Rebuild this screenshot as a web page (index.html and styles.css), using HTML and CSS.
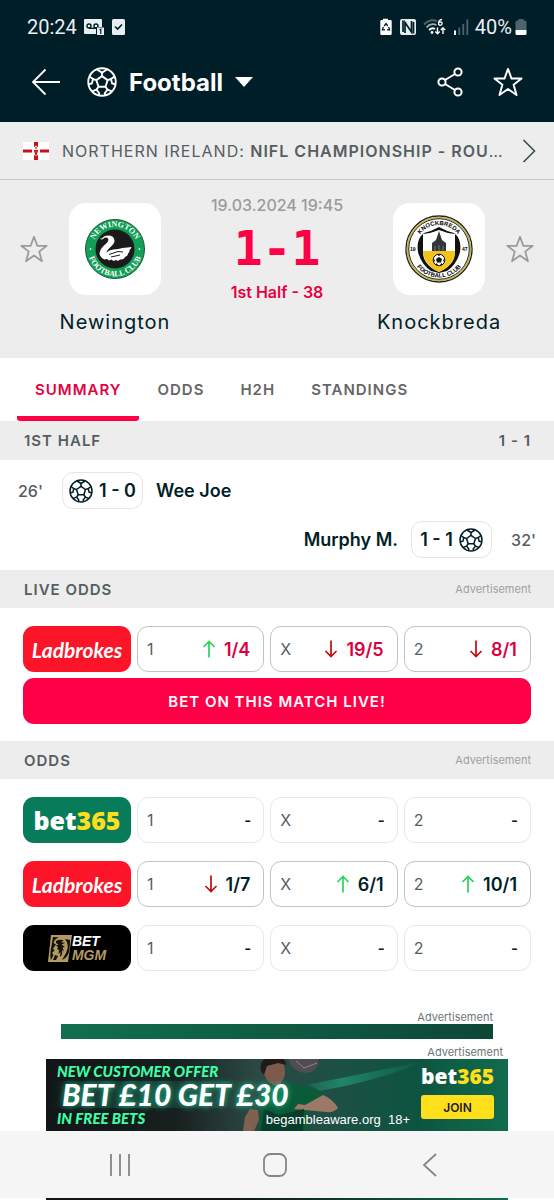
FILE: index.html
```html
<!DOCTYPE html>
<html lang="en">
<head>
    <meta charset="UTF-8">
    <meta name="viewport" content="width=device-width, initial-scale=1.0">
    <title>Newington - Knockbreda</title>
    <link rel="stylesheet" href="styles.css">
</head>
<body>

    <!-- Shared icons -->
    <svg class="sprite" aria-hidden="true">
        <symbol id="ball" viewBox="0 0 24 24">
            <g fill="none" stroke="currentColor" stroke-width="1.5" stroke-linejoin="round">
                <circle cx="12" cy="12" r="11"/>
                <path d="M12 7.300l4.500 3.200-1.700 5.300H9.200L7.500 10.500z"/>
                <path d="M12 7.300V4.500M16.500 10.500l2.700-.9M14.800 15.800l1.600 2.300M9.200 15.800l-1.600 2.300M7.500 10.500l-2.700-.9"/>
                <path d="M8 2l4 2.500L16 2M22 7.500l-2.800 2.100.9 3.600 2.700.6M20 19.500l-3.600-1.400-2.200 2.900.4 1.700M9.400 22.700l.4-1.700-2.200-2.900L4 19.500M1.200 13.800l2.700-.6.9-3.600L2 7.500"/>
            </g>
        </symbol>
        <symbol id="star" viewBox="0 0 28 28">
            <path d="M14 1.8l3.300 9h9.400l-7.500 5.800 2.800 9.600-8-5.600-8 5.600 2.800-9.600-7.500-5.800h9.400z" fill="none" stroke="currentColor" stroke-width="1.8" stroke-linejoin="round"/>
        </symbol>
        <symbol id="up" viewBox="0 0 14 18">
            <path d="M7 17.500V1.500M1.500 7L7 1.500 12.500 7" fill="none" stroke="currentColor" stroke-width="1.700"/>
        </symbol>
        <symbol id="down" viewBox="0 0 14 18">
            <path d="M7 .5v16M1.500 11L7 16.500 12.500 11" fill="none" stroke="currentColor" stroke-width="1.700"/>
        </symbol>
    </svg>

    <header class="top">
        <div class="status-bar">
            <span class="clock">20:24</span>
            <svg width="22" height="18" viewBox="0 0 22 18">
                <path d="M2 1h16q1 0 1 1v7h-6v7H2q-1 0-1-1V2q0-1 1-1z" fill="#e8eef0"/>
                <g fill="none" stroke="#001e28" stroke-width="1.400">
                    <circle cx="6" cy="8" r="2"/>
                    <circle cx="13" cy="8" r="2"/>
                    <path d="M6 10.300h7"/>
                </g>
                <path d="M14 9.500h7V17h-7z" fill="#e8eef0"/>
                <path d="M16.500 12l1.300-.8V16" fill="none" stroke="#001e28" stroke-width="1.200"/>
            </svg>
            <svg class="task" width="15" height="18" viewBox="0 0 15 18">
                <rect x="1" y="1" width="13" height="16" rx="1.500" fill="#e8eef0"/>
                <path d="M4 8.500l2.600 2.600L11 6.500" fill="none" stroke="#001e28" stroke-width="1.600"/>
            </svg>
            <div class="status-right">
                <svg width="14" height="18" viewBox="0 0 14 18">
                    <path d="M4 2V.8h5V2h2.500q1.200 0 1.200 1.200v12.600q0 1.200-1.200 1.200h-9q-1.200 0-1.200-1.200V3.200Q1.300 2 2.500 2z" fill="#fff"/>
                    <path d="M5.200 8L7 5.500 8.800 8M9.600 9l1 2.800H8M6 11.800H3.400l1-2.800" fill="none" stroke="#001e28" stroke-width="1.300"/>
                </svg>
                <svg width="18" height="18" viewBox="0 0 18 18">
                    <rect x="1" y="1" width="16" height="16" rx="2" fill="#e8eef0"/>
                    <path d="M6 15V4.500l6.500 9.500V3M4 2.500v11.500M14.500 4v11.500" fill="none" stroke="#001e28" stroke-width="1.700"/>
                </svg>
                <svg width="24" height="18" viewBox="0 0 24 18">
                    <g fill="none" stroke-width="1.800">
                        <path d="M1 6.500Q7 .3 14 3.200" stroke="#4e646c"/>
                        <path d="M3.500 9.300Q8 4.500 13.500 7" stroke="#9fadb2"/>
                        <path d="M6 12Q9 9 12 11" stroke="#fff"/>
                        <path d="M19 1.500q-3.500.5-3.500 3.800 0 2 1.800 2t1.800-1.700-1.800-1.600-1.700 1.300" stroke="#fff" stroke-width="1.300"/>
                        <path d="M14.500 9.500v6m-2.200-2l2.200 2.200 2.200-2.200M20 16v-6m-2.200 2L20 9.800l2.200 2.200" stroke="#fff" stroke-width="1.400"/>
                    </g>
                    <circle cx="9" cy="14.500" r="1.400" fill="#fff"/>
                </svg>
                <svg width="16" height="18" viewBox="0 0 16 18">
                    <path d="M2 12.500V17" stroke="#fff" stroke-width="2"/>
                    <path d="M6.300 9.500V17M10.300 6V17M14.300 1.500V17" stroke="#4e646c" stroke-width="1.800"/>
                </svg>
                <span class="clock battery">40%
                    <svg width="12" height="18" viewBox="0 0 12 18">
                        <path d="M3.500 2.500V1h5v1.500H10q1.500 0 1.500 1.500v8H.5V4Q.5 2.500 2 2.500z" fill="#4e646c"/>
                        <path d="M.5 12h11v3.500q0 1.500-1.500 1.500H2q-1.500 0-1.500-1.500z" fill="#fff"/>
                    </svg>
                </span>
            </div>
        </div>
        <div class="app-bar">
            <button class="icon-btn" type="button" aria-label="Back">
                <svg width="30" height="28" viewBox="0 0 30 28"><path d="M29 14H2M14.500 1.500L2 14l12.500 12.500" fill="none" stroke="currentColor" stroke-width="1.800"/></svg>
            </button>
            <button class="sport" type="button">
                <svg width="30" height="30"><use href="#ball"/></svg>
                <span>Football</span>
                <svg width="18" height="10" viewBox="0 0 18 10"><path d="M0 0h18L9 10z" fill="currentColor"/></svg>
            </button>
            <button class="icon-btn share" type="button" aria-label="Share">
                <svg width="28" height="30" viewBox="0 0 28 30">
                    <g fill="none" stroke="currentColor" stroke-width="2">
                        <circle cx="6" cy="15" r="3.600"/>
                        <circle cx="22" cy="5" r="3.600"/>
                        <circle cx="22" cy="25" r="3.600"/>
                        <path d="M9 13l10-6M9 17l10 6"/>
                    </g>
                </svg>
            </button>
            <button class="icon-btn" type="button" aria-label="Add to favourites">
                <svg width="30" height="30"><use href="#star"/></svg>
            </button>
        </div>
    </header>

    <a class="league" href="#league">
        <svg width="26" height="18" viewBox="0 0 26 18">
            <path d="M0 0h26v18H0z" fill="#fff"/>
            <path d="M11 0h4v18h-4zM0 7.500h26v3H0z" fill="#c4131a"/>
            <path d="M13 3.500l1.500 1.500h2l.5 4-.5 4h-2L13 14.500 11.500 13h-2L9 9l.5-4h2z" fill="#fff"/>
            <path d="M13 5v2M11.500 8.500L13 13l1.500-4.500z" stroke="#c4131a" stroke-width="1.200" fill="#d9534f"/>
        </svg>
        <span class="league-name">NORTHERN IRELAND: <b>NIFL CHAMPIONSHIP - ROUND 33</b></span>
        <svg width="14" height="24" viewBox="0 0 14 24"><path d="M1.500 1l11 11-11 11" fill="none" stroke="#3c4a50" stroke-width="1.600"/></svg>
    </a>

    <main>
        <section class="match">
            <button class="fav" type="button" aria-label="Follow Newington"><svg width="28" height="30"><use href="#star"/></svg></button>
            <div class="team">
                <div class="crest">
                    <svg width="60" height="60" viewBox="0 0 60 60">
                        <defs>
                            <path id="n-top" d="M7.500 30a22.500 22.500 0 0 1 45 0"/>
                            <path id="n-bottom" d="M2.700 30a27.300 27.300 0 0 0 54.600 0"/>
                        </defs>
                        <circle cx="30" cy="30" r="29.500" fill="#12a057" stroke="#1d5c3a"/>
                        <circle cx="30" cy="30" r="19.500" fill="#1c1a1b"/>
                        <text class="crest-text" fill="#fff" text-anchor="middle"><textPath href="#n-top" startOffset="50%">NEWINGTON</textPath></text>
                        <text class="crest-text" fill="#fff" text-anchor="middle"><textPath href="#n-bottom" startOffset="50%">FOOTBALL CLUB</textPath></text>
                        <circle cx="5.500" cy="30" r=".9" fill="#fff"/>
                        <circle cx="54.500" cy="30" r=".9" fill="#fff"/>
                        <path d="M17 19.500q2-3 6-3 6 0 6.500 5 0 3-4 6.500t-4 6q1.500-3 7-3.500 5-.5 9-1.500 5-.5 9-1-.5 2-2 3 .5 2-1.500 3.500 0 2.500-3 3.500-1 3-5 2.500l-2 1.500-2-1-2.500 1-2-1.500-2.500 1-2-1.500-2.500.5q-4.500-2-5-6 0-4 5-8.500 5-4 3.500-6.500-2-2-5 .5-1.500 1-3-.5z" fill="#fff"/>
                        <path d="M24 35.500l9-3 5 .5M26 38l9-2" fill="none" stroke="#1c1a1b" stroke-width="1"/>
                    </svg>
                </div>
                <span class="team-name">Newington</span>
            </div>
            <div class="result">
                <time class="date">19.03.2024 19:45</time>
                <strong class="score">1-1</strong>
                <span class="period">1st Half - 38</span>
            </div>
            <div class="team">
                <div class="crest">
                    <svg width="68" height="68" viewBox="0 0 68 68">
                        <defs>
                            <path id="k-top" d="M10 34a24 24 0 0 1 48 0"/>
                            <path id="k-bottom" d="M5.500 34a28.500 28.500 0 0 0 57 0"/>
                        </defs>
                        <circle cx="34" cy="34" r="33" fill="#fff" stroke="#222" stroke-width="1.400"/>
                        <circle cx="34" cy="34" r="31.500" fill="none" stroke="#c3b548" stroke-width="1.600"/>
                        <circle cx="34" cy="34" r="30.300" fill="none" stroke="#222"/>
                        <path d="M19 18Q27 16 34 12q7 4 15 6 8 6 6 19-3 12-13 19l-8 2-8-2Q16 49 13 37q-2-13 6-19z" fill="#111"/>
                        <path d="M18 19q9-1 16-4 7 3 16 4v18q0 13-16 20-16-7-16-20z" fill="#fff"/>
                        <path d="M18 36h32q0 14-16 21-16-7-16-21z" fill="#f4c31c"/>
                        <path d="M27 36v-8l4-3 3-9 3 9 4 3v8z" fill="#33353b"/>
                        <path d="M30 36v-5M34 36v-6M38 36v-5" stroke="#777" stroke-width="1"/>
                        <circle cx="34" cy="45" r="5.800" fill="#fff" stroke="#111"/>
                        <path d="M34 42l3 2-1 3.500h-4L31 44zM32 39.500h4l-2 1.500zM28.500 44l1.500 1-.5 2zM39.500 44l-1.500 1 .5 2zM30.500 50l1-2 1.500 2zM37.500 50l-1-2-1.500 2z" fill="#111"/>
                        <text class="crest-text knock" text-anchor="middle"><textPath href="#k-top" startOffset="50%">KNOCKBREDA</textPath></text>
                        <text class="crest-text knock" text-anchor="middle"><textPath href="#k-bottom" startOffset="50%">FOOTBALL CLUB</textPath></text>
                        <text class="crest-text year" x="5" y="36">19</text>
                        <text class="crest-text year" x="57" y="36">47</text>
                    </svg>
                </div>
                <span class="team-name">Knockbreda</span>
            </div>
            <button class="fav" type="button" aria-label="Follow Knockbreda"><svg width="28" height="30"><use href="#star"/></svg></button>
        </section>

        <nav class="tabs">
            <a class="tab active" href="#summary">SUMMARY</a>
            <a class="tab" href="#odds">ODDS</a>
            <a class="tab" href="#h2h">H2H</a>
            <a class="tab" href="#standings">STANDINGS</a>
        </nav>

        <section id="summary">
            <h2 class="section-head"><span>1ST HALF</span><span>1 - 1</span></h2>
            <div class="incidents">
                <div class="incident">
                    <span class="minute">26'</span>
                    <span class="goal"><svg width="24" height="24"><use href="#ball"/></svg>1 - 0</span>
                    <span class="player">Wee Joe</span>
                </div>
                <div class="incident away">
                    <span class="player">Murphy M.</span>
                    <span class="goal">1 - 1<svg width="24" height="24"><use href="#ball"/></svg></span>
                    <span class="minute">32'</span>
                </div>
            </div>
        </section>

        <section>
            <h2 class="section-head"><span>LIVE ODDS</span><small>Advertisement</small></h2>
            <div class="odds live">
                <div class="odds-row">
                    <a class="bookmaker ladbrokes" href="#ladbrokes">Ladbrokes</a>
                    <button class="odd" type="button"><span>1</span><svg class="green" width="14" height="18"><use href="#up"/></svg><b>1/4</b></button>
                    <button class="odd" type="button"><span>X</span><svg class="red" width="14" height="18"><use href="#down"/></svg><b>19/5</b></button>
                    <button class="odd" type="button"><span>2</span><svg class="red" width="14" height="18"><use href="#down"/></svg><b>8/1</b></button>
                </div>
                <button class="bet-live" type="button">BET ON THIS MATCH LIVE!</button>
            </div>
        </section>

        <section id="odds">
            <h2 class="section-head"><span>ODDS</span><small>Advertisement</small></h2>
            <div class="odds">
                <div class="odds-row">
                    <a class="bookmaker bet365" href="#bet365">bet<i>365</i></a>
                    <button class="odd empty" type="button"><span>1</span><b>-</b></button>
                    <button class="odd empty" type="button"><span>X</span><b>-</b></button>
                    <button class="odd empty" type="button"><span>2</span><b>-</b></button>
                </div>
                <div class="odds-row">
                    <a class="bookmaker ladbrokes" href="#ladbrokes">Ladbrokes</a>
                    <button class="odd" type="button"><span>1</span><svg class="red" width="14" height="18"><use href="#down"/></svg><b>1/7</b></button>
                    <button class="odd" type="button"><span>X</span><svg class="green" width="14" height="18"><use href="#up"/></svg><b>6/1</b></button>
                    <button class="odd" type="button"><span>2</span><svg class="green" width="14" height="18"><use href="#up"/></svg><b>10/1</b></button>
                </div>
                <div class="odds-row">
                    <a class="bookmaker betmgm" href="#betmgm">
                        <svg width="24" height="27" viewBox="0 0 24 27">
                            <path d="M3 0h21l-4 27H0z" fill="#b39a62"/>
                            <path d="M5 2l6 .5Q6 4 5.500 8L8 9.500l-3 4 1.500 2L4 18l1.500 2L3 25q-1-2-.5-8zM8 6q4-2 8-.5l-3 1.500 4 1-3.500 1.500L17 12l-2.500.5 1.500 4-2-1.500q1 5-2 7l.5-5-2 2 .5-4-2-1 1-2-2-1.500 2.500-1L8 8zM17 4q5 6 1 14l-4 7q6-3 7-8t1-12zM7 20l3 1-2 4H5z" fill="#15120b"/>
                        </svg>
                        <span>BET<i>MGM</i></span>
                    </a>
                    <button class="odd empty" type="button"><span>1</span><b>-</b></button>
                    <button class="odd empty" type="button"><span>X</span><b>-</b></button>
                    <button class="odd empty" type="button"><span>2</span><b>-</b></button>
                </div>
            </div>
        </section>

        <aside class="ads">
            <div class="ad-slim">
                <small>Advertisement</small>
                <div class="slim-bar"></div>
            </div>
            <div class="ad-wide">
                <small>Advertisement</small>
                <div class="banner">
                    <svg class="artwork" viewBox="0 0 462 72" preserveAspectRatio="none" aria-hidden="true">
                        <defs>
                            <linearGradient id="pitch">
                                <stop offset="0" stop-color="#121517"/>
                                <stop offset=".28" stop-color="#17201f"/>
                                <stop offset=".45" stop-color="#2c4843"/>
                                <stop offset=".62" stop-color="#1d5045"/>
                                <stop offset=".8" stop-color="#0d5440"/>
                                <stop offset="1" stop-color="#106c4d"/>
                            </linearGradient>
                            <linearGradient id="beam">
                                <stop offset="0" stop-color="#21b98c" stop-opacity="0"/>
                                <stop offset=".4" stop-color="#21b98c" stop-opacity=".5"/>
                                <stop offset="1" stop-color="#21b98c" stop-opacity="0"/>
                            </linearGradient>
                        </defs>
                        <path d="M0 0h462v72H0z" fill="url(#pitch)"/>
                        <path d="M0 22h220v27H0z" fill="url(#beam)" opacity=".5"/>
                        <path d="M240 36Q310 30 380 2L260 26z" fill="url(#beam)"/>
                        <path d="M212 72l3-34q8-14 24-14l22 2q15 4 19 16l-18 8-1 22z" fill="#0b5a38"/>
                        <path d="M259 46l18-10q10 4 15 13-4 5-12 4l-32-3 4-5z" fill="#9b7867"/>
                        <path d="M216 3q10-8 22 0l1 12q-2 9-8 12-10-2-13-12z" fill="#7d5a4b"/>
                        <path d="M215 12q-3-14 14-14 11 0 11 8l-8-2-11 3-3 9z" fill="#211a18"/>
                        <path d="M197 72l2-14 5-8 8 1 1 10-5 11z" fill="#80604f"/>
                        <path d="M242 0h31q-1 13-12 14-14 0-19-14z" fill="#504c50"/>
                        <path d="M250 2l8 7 13-5" fill="none" stroke="#8c8589"/>
                        <path d="M215 72l3-22 15 6 25-6-1 22z" fill="#073d2a"/>
                    </svg>
                    <div class="offer">
                        <span>NEW CUSTOMER OFFER</span>
                        <strong>BET £10 GET £30</strong>
                        <span>IN FREE BETS</span>
                    </div>
                    <span class="aware">begambleaware.org&nbsp; 18+</span>
                    <div class="cta">
                        <span class="cta-logo">bet<i>365</i></span>
                        <button type="button">JOIN</button>
                    </div>
                </div>
            </div>
        </aside>
    </main>

    <nav class="system-nav">
        <button type="button" aria-label="Recent apps"><svg width="24" height="24" viewBox="0 0 24 24"><path d="M3 1v22M12 1v22M21 1v22" stroke="currentColor" stroke-width="1.800"/></svg></button>
        <button type="button" aria-label="Home"><svg width="24" height="24" viewBox="0 0 24 24"><rect x="1" y="1" width="22" height="22" rx="6.500" fill="none" stroke="currentColor" stroke-width="1.800"/></svg></button>
        <button type="button" aria-label="Back"><svg width="24" height="24" viewBox="0 0 24 24"><path d="M18 1L6 12l12 11" fill="none" stroke="currentColor" stroke-width="1.800"/></svg></button>
    </nav>
    <div class="next-ad"></div>

</body>
</html>
```

FILE: styles.css
```css
* {
    box-sizing: border-box;
}

body {
    font-family: Inter, "Liberation Sans", sans-serif;
    font-size: 16px;
    background-color: #fff;
    color: #001e28;
    margin: 0;
}

button {
    font: inherit;
    color: inherit;
    background: none;
    border: none;
    margin: 0;
    padding: 0;
    cursor: pointer;
}

a {
    color: inherit;
    text-decoration: none;
}

svg {
    display: block;
    flex: none;
}

small {
    font-size: 11px;
    line-height: 14px;
    font-weight: 400;
}

.sprite {
    position: absolute;
    width: 0;
    height: 0;
}

/* Header */
.top {
    background-color: #001e28;
    color: #fff;
    padding-bottom: 12px;
}

.status-bar {
    display: flex;
    align-items: center;
    gap: 6px;
    height: 54px;
    padding: 0 27px;
}

.clock {
    font-family: Roboto, sans-serif;
    font-size: 20px;
    color: #e8eef0;
}

.battery {
    display: flex;
    align-items: center;
    gap: 3px;
}

.status-right {
    display: flex;
    align-items: center;
    gap: 6px;
    margin-left: auto;
}

.app-bar {
    display: flex;
    align-items: center;
    height: 56px;
    padding: 0 31px;
}

.sport {
    display: flex;
    align-items: center;
    gap: 12px;
    margin: 0 auto 0 26px;
    font-size: 24px;
    font-weight: 700;
}

.share {
    margin-right: 29px;
}

/* League */
.league {
    display: flex;
    align-items: center;
    gap: 13px;
    height: 58px;
    padding: 0 18px 0 23px;
    background-color: #ededed;
    border-bottom: 1px solid #c8c8c8;
    color: #555e61;
}

.league-name {
    flex: 1;
    min-width: 0;
    overflow: hidden;
    text-overflow: ellipsis;
    white-space: nowrap;
    letter-spacing: 1px;
}

.league b {
    font-weight: 600;
}

/* Match */
.match {
    display: grid;
    grid-template-columns: 28px 92px 1fr 92px 28px;
    column-gap: 21px;
    align-items: start;
    padding: 16px 20px 24px;
    background-color: #ededed;
}

.fav {
    display: flex;
    align-items: center;
    height: 92px;
    margin-top: 7px;
    color: #9b9b9b;
}

.team {
    display: flex;
    flex-direction: column;
    align-items: center;
    gap: 15px;
    margin-top: 7px;
}

.crest {
    display: flex;
    align-items: center;
    justify-content: center;
    width: 92px;
    height: 92px;
    border-radius: 17px;
    background-color: #fff;
}

.crest-text {
    font-family: "Liberation Serif", serif;
    font-size: 8px;
    font-weight: bold;
}

.crest-text.knock {
    font-family: "Liberation Sans", sans-serif;
    font-size: 6px;
}

.crest-text.year {
    font-family: "Liberation Sans", sans-serif;
    font-size: 5px;
}

.team-name {
    font-size: 20px;
    line-height: 24px;
    letter-spacing: 1px;
    white-space: nowrap;
}

.result {
    display: flex;
    flex-direction: column;
    align-items: center;
    white-space: nowrap;
}

.date {
    font-size: 16px;
    line-height: 18px;
    font-weight: 500;
    color: #9b9b9b;
}

.score {
    font-family: "DejaVu Sans Mono", monospace;
    font-size: 48px;
    line-height: 69px;
    color: #ff0046;
}

.period {
    font-size: 16px;
    line-height: 18px;
    font-weight: 600;
    color: #e6003f;
}

/* Tabs */
.tabs {
    display: flex;
    padding: 0 17px;
}

.tab {
    padding: 0 18px;
    font-size: 15px;
    line-height: 63px;
    font-weight: 600;
    letter-spacing: 1px;
    color: #666;
}

.tab.active {
    color: #e6003f;
    background: linear-gradient(#ff0046, #ff0046) bottom / 100% 5px no-repeat;
    border-radius: 3px;
}

/* Section headings */
.section-head {
    display: flex;
    align-items: center;
    justify-content: space-between;
    height: 38px;
    margin: 0;
    padding: 0 23px 0 24px;
    background-color: #ededed;
    color: #555e61;
    font-size: 15px;
    font-weight: 600;
    letter-spacing: 1px;
}

.section-head small {
    color: #a0a0a0;
    letter-spacing: 0;
}

#summary .section-head {
    height: 39px;
}

/* Incidents */
.incidents {
    padding: 6px 18px;
}

.incident {
    display: flex;
    align-items: center;
    gap: 13px;
    height: 49px;
}

.away {
    justify-content: flex-end;
}

.minute {
    width: 31px;
    font-size: 16px;
    font-weight: 500;
    color: #555e61;
}

.away .minute {
    text-align: right;
}

.goal {
    display: flex;
    align-items: center;
    justify-content: center;
    gap: 6px;
    width: 81px;
    height: 37px;
    border: 1px solid #e5e5e5;
    border-radius: 11px;
    font-size: 18px;
    font-weight: 600;
    white-space: nowrap;
}

.player {
    font-size: 18px;
    font-weight: 600;
}

/* Odds */
.odds {
    display: grid;
    gap: 18px;
    padding: 18px 23px;
}

.odds.live {
    gap: 6px;
    padding-bottom: 17px;
}

.odds-row {
    display: grid;
    grid-template-columns: 108px repeat(3, 1fr);
    gap: 6px;
}

.bookmaker {
    display: flex;
    align-items: center;
    justify-content: center;
    height: 46px;
    border-radius: 11px;
    color: #fff;
}

.ladbrokes {
    background-color: #fc1428;
    font-family: Lato, sans-serif;
    font-size: 21px;
    font-weight: 700;
    font-style: italic;
}

.bet365 {
    background-color: #087b5b;
    font-family: "Open Sans", sans-serif;
    font-size: 25px;
    font-weight: 800;
}

.bet365 i,
.cta-logo i {
    font-style: normal;
    color: #ffdf1b;
}

.betmgm {
    background-color: #000;
    font-family: "Liberation Sans", sans-serif;
    font-size: 14px;
    line-height: 14px;
    font-weight: bold;
    font-style: italic;
}

.betmgm i {
    display: block;
    color: #b39a62;
}

.odd {
    display: flex;
    align-items: center;
    gap: 8px;
    height: 46px;
    padding: 0 13px 0 9px;
    border: 1px solid #bcc4c4;
    border-radius: 11px;
}

.odd span {
    margin-right: auto;
    font-size: 16px;
    color: #555e61;
}

.odd b {
    font-size: 18px;
    font-weight: 600;
}

.live .odd b {
    color: #dc0040;
}

.odd.empty {
    padding-right: 12px;
    border-color: #e8e8e8;
}

.odd.empty b {
    font-size: 15px;
}

.green {
    color: #2fd05a;
}

.red {
    color: #c00d0d;
}

.bet-live {
    height: 46px;
    border-radius: 11px;
    background-color: #ff0046;
    color: #fff;
    font-size: 15px;
    font-weight: 600;
    letter-spacing: 1px;
}

/* Ads */
.ads {
    padding-top: 21px;
}

.ads small {
    display: block;
    text-align: right;
    color: #6c7578;
}

.ad-slim {
    max-width: 432px;
    margin: 0 auto 6px;
}

.slim-bar {
    height: 15px;
    background: linear-gradient(90deg, #116f4f, #0d4736);
}

.ad-wide {
    max-width: 462px;
    margin: 0 auto;
}

.ad-wide small {
    padding-right: 5px;
}

.banner {
    position: relative;
    display: flex;
    height: 72px;
    padding: 4px 14px 4px 11px;
    overflow: hidden;
    color: #fff;
}

.artwork {
    position: absolute;
    inset: 0;
    width: 100%;
    height: 100%;
}

.offer {
    position: relative;
    font-family: Lato, sans-serif;
    font-size: 15px;
    line-height: 16px;
    font-weight: 900;
    font-style: italic;
    color: #3cffa8;
    white-space: nowrap;
}

.offer span,
.offer strong {
    display: block;
}

.offer strong {
    padding-left: 5px;
    font-size: 30px;
    line-height: 31px;
    font-weight: 900;
    color: #fff;
    text-shadow: 0 0 6px #1fc795;
}

/* Runs over the end of the offer text */
.aware {
    position: absolute;
    right: 98px;
    bottom: 3px;
    font-family: "Liberation Sans", sans-serif;
    font-size: 13px;
    line-height: 16px;
}

.cta {
    position: relative;
    display: flex;
    flex-direction: column;
    width: 73px;
    margin-left: auto;
}

.cta-logo {
    font-family: "Open Sans", sans-serif;
    font-size: 21px;
    line-height: 27px;
    font-weight: 800;
    text-align: center;
}

.cta button {
    height: 24px;
    margin-top: 5px;
    border-radius: 3px;
    background-color: #ffdf1b;
    color: #1c1c1c;
    font-size: 12px;
    font-weight: 600;
}

/* System navigation */
.system-nav {
    display: grid;
    grid-template-columns: repeat(3, 1fr);
    justify-items: center;
    height: 67px;
    padding: 0 46px 0 42px;
    background-color: #f5f5f5;
    color: #858585;
}

.next-ad {
    max-width: 462px;
    height: 2px;
    margin: 0 auto;
    background: linear-gradient(90deg, #121517 40%, #106c4d);
}
```
